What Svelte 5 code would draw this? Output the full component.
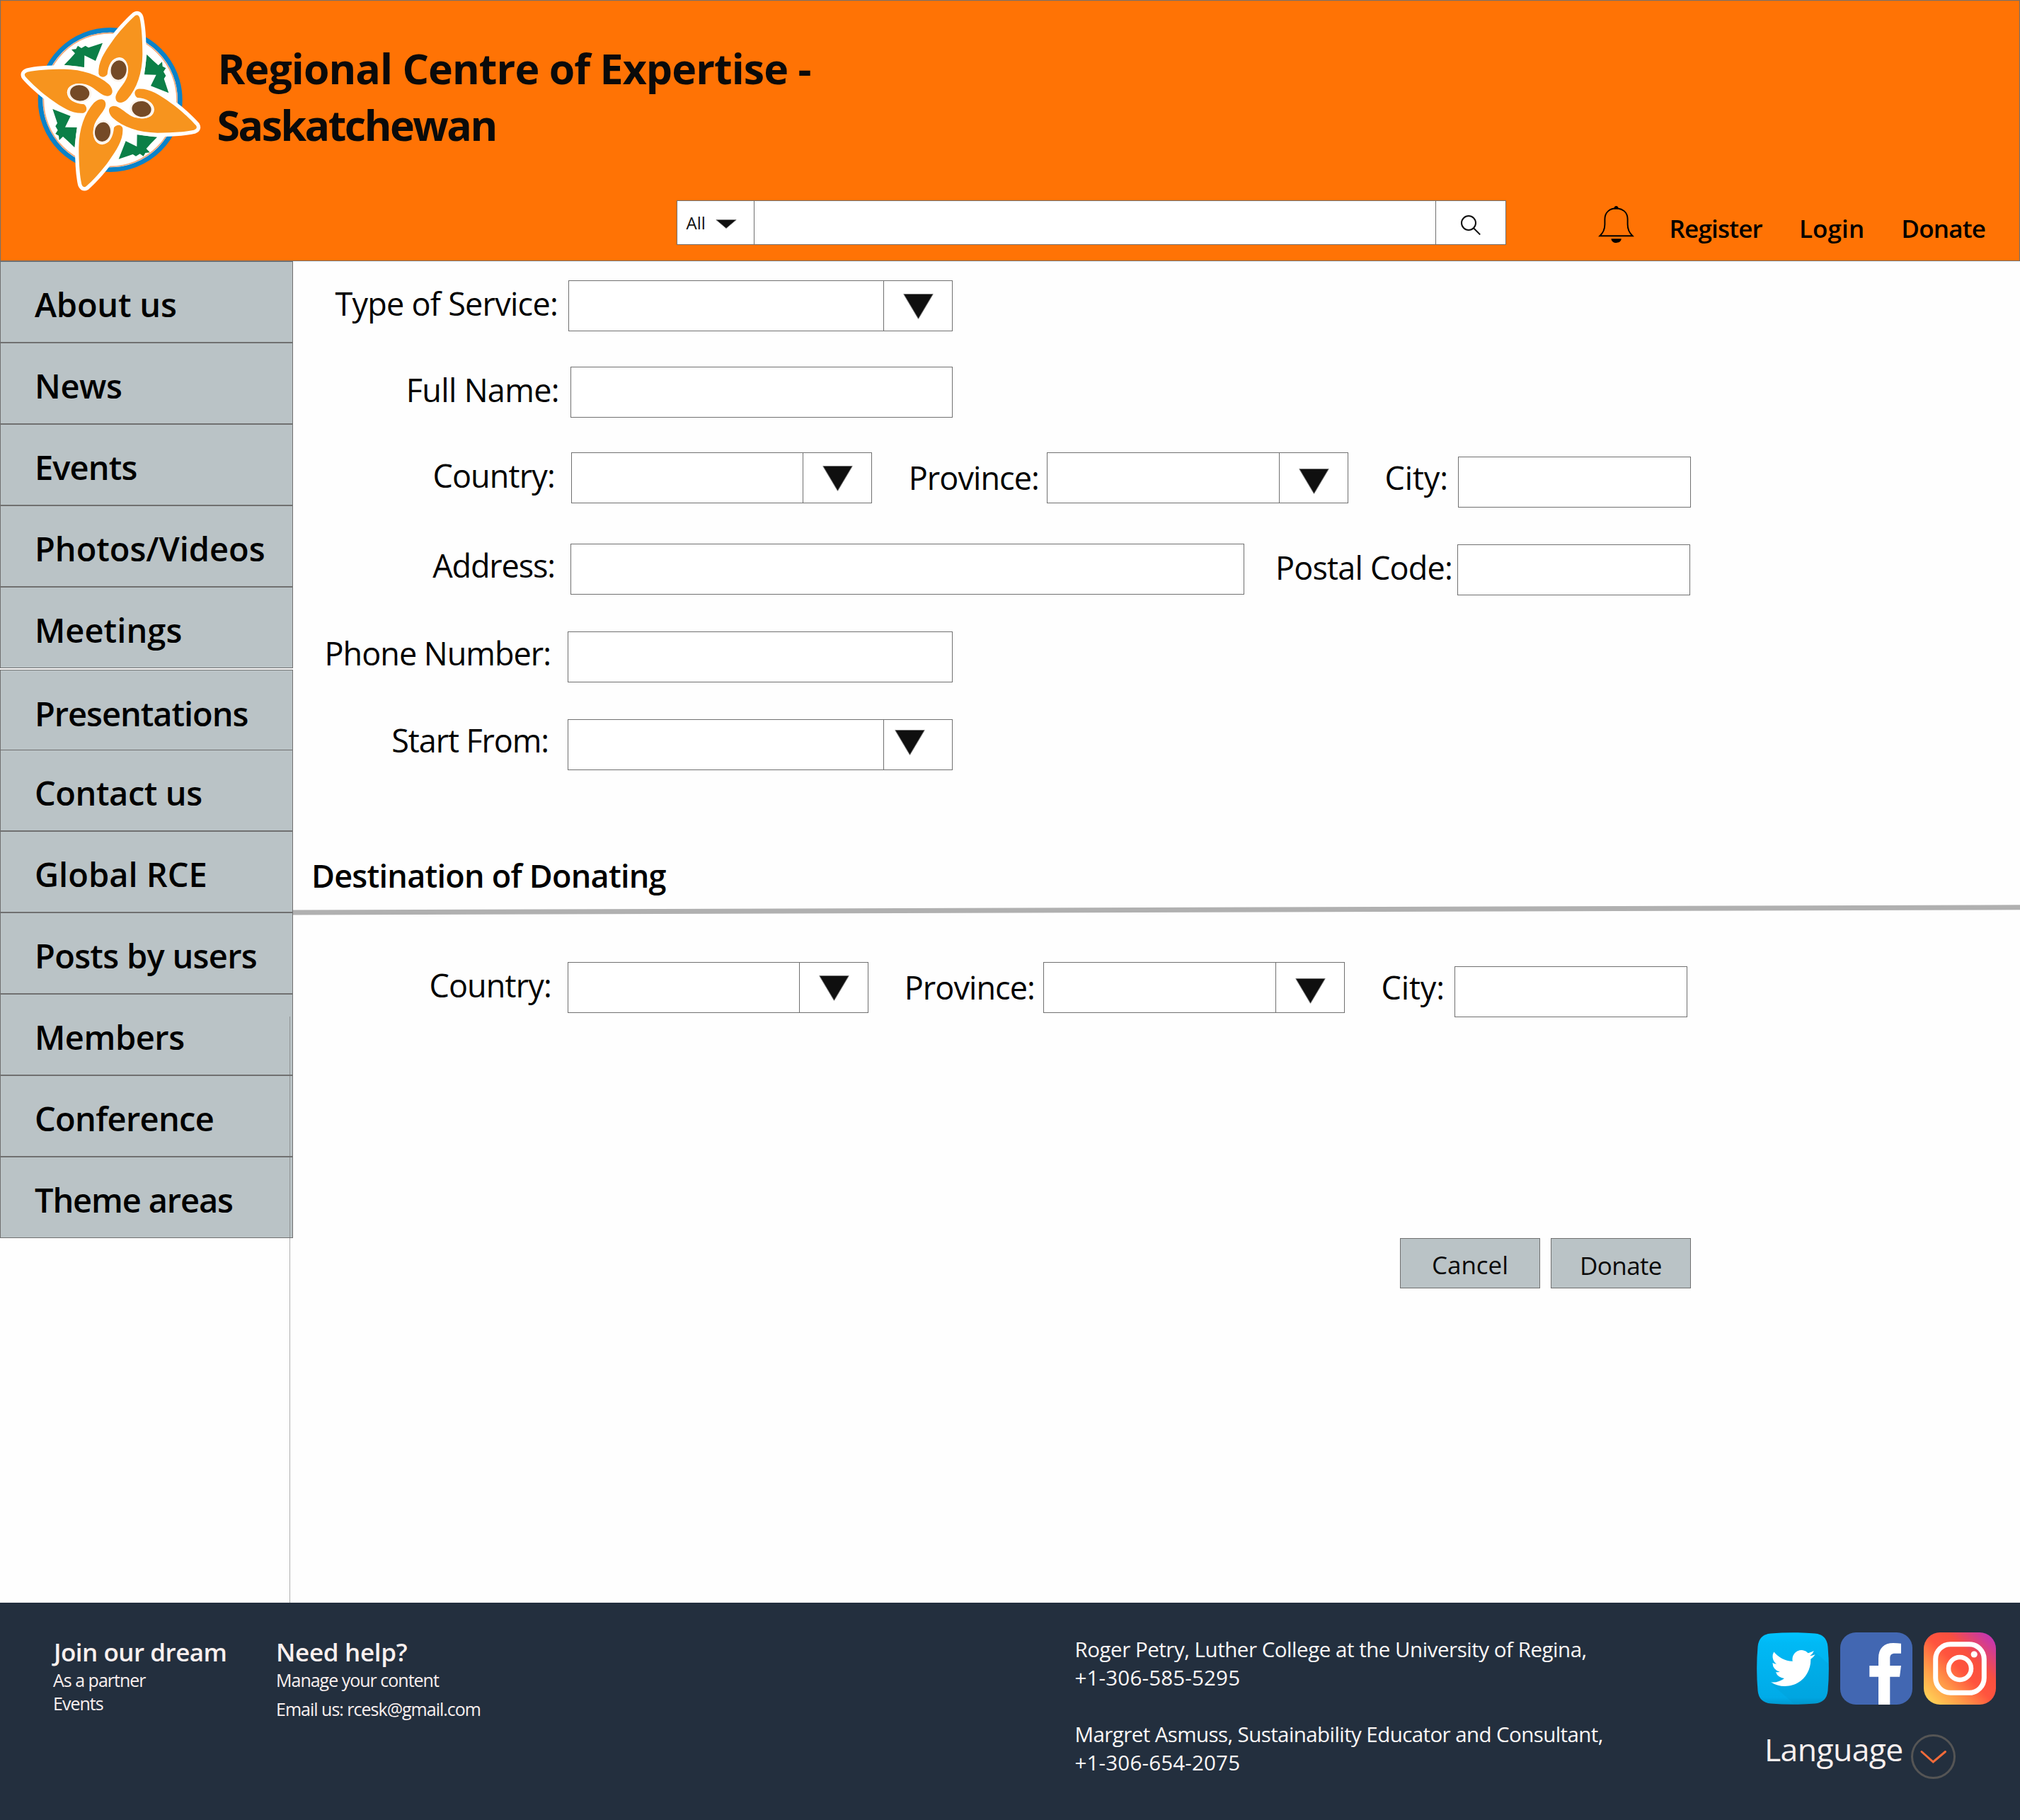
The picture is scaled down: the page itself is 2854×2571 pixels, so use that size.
<script>
  const navGroups = [
    [
      { label: 'About us', track: -0.22 },
      { label: 'News', track: -0.41 },
      { label: 'Events', track: -0.87 },
      { label: 'Photos/Videos', track: -0.05 },
      { label: 'Meetings', track: 0.05 }
    ],
    [{ label: 'Presentations', track: -1.05 }],
    [
      { label: 'Contact us', track: -0.45 },
      { label: 'Global RCE', track: 0.0 },
      { label: 'Posts by users', track: -0.7 },
      { label: 'Members', track: -0.45 },
      { label: 'Conference', track: -0.7 },
      { label: 'Theme areas', track: -1.15 }
    ]
  ];

  const account = [
    { label: 'Register', track: -0.8 },
    { label: 'Login', track: 0.12 },
    { label: 'Donate', track: -0.78 }
  ];

  const petals = [0, 90, 180, 270];
</script>

{#snippet field(name, label, isSelect = false)}
  <div class="field {name}">
    <span class="label">{label}</span>
    <div class="box">
      {#if isSelect}
        <div class="toggle">
          <svg class="caret" viewBox="0 0 43 36"><path d="M.8 .5H42.2L21.5 35.3Z" fill="#0f0f0f" stroke="#707070" stroke-width="1" /></svg>
        </div>
      {/if}
    </div>
  </div>
{/snippet}

<div class="page">
  <header>
    <div class="brand">
      <svg class="logo" viewBox="0 0 870 840">
        <circle cx="467" cy="423" r="296" fill="#fff" stroke="#0a82c8" stroke-width="20" />
        <circle cx="467" cy="423" r="283" fill="none" stroke="#f3a878" stroke-width="5" />
        {#each petals as angle}
          <g transform="rotate({angle} 469 428)">
            <path d="M272 275L300 246L318 226L303 210L322 208L330 194L345 204L362 194L375 202L435 182L405 258L358 235L357 285Z" fill="#0b7f47" />
          </g>
        {/each}
        {#each petals as angle}
          <g transform="rotate({angle} 469 428)">
            <path d="M573 66C545 90 500 140 478 172C440 225 415 265 418 312C422 330 445 330 455 315C458 275 475 245 505 243C540 245 548 285 540 320C530 360 490 385 490 415C492 442 520 440 540 420C580 375 603 310 604 230C604 170 600 110 592 75Q586 58 573 66Z" fill="#fff" stroke="#fff" stroke-width="32" stroke-linejoin="round" />
          </g>
        {/each}
        {#each petals as angle}
          <g transform="rotate({angle} 469 428)">
            <path d="M573 66C545 90 500 140 478 172C440 225 415 265 418 312C422 330 445 330 455 315C458 275 475 245 505 243C540 245 548 285 540 320C530 360 490 385 490 415C492 442 520 440 540 420C580 375 603 310 604 230C604 170 600 110 592 75Q586 58 573 66Z" fill="#f7941e" />
            <ellipse cx="503" cy="297" rx="40" ry="50" fill="#fdf3ea" transform="rotate(8 503 297)" />
            <ellipse cx="503" cy="297" rx="33" ry="41" fill="#754a26" transform="rotate(8 503 297)" />
          </g>
        {/each}
      </svg>
      <h1>Regional Centre of Expertise -<br /><span>Saskatchewan</span></h1>
    </div>
    <div class="utility">
      <div class="search">
        <div class="scope">
          <span>All</span>
          <svg class="scope-caret" viewBox="0 0 30 13"><path d="M.8 .5H29.2L15 12.5Z" fill="#0f0f0f" stroke="#707070" stroke-width=".8" /></svg>
        </div>
        <div class="query"></div>
        <div class="go">
          <svg viewBox="0 0 28 28" fill="none" stroke="#0f0f0f" stroke-width="2"><circle cx="11" cy="11" r="10" /><path d="M18 18.2L27.2 27.4" /></svg>
        </div>
      </div>
      <svg class="bell" viewBox="0 0 51 52">
        <path d="M2.4 42.3C7.5 37.5 9.4 33 9.4 26V18.500C9.400 8.500 17 3.300 25.500 3.300S41.600 8.500 41.600 18.500V26C41.600 33 43.500 37.500 48.600 42.300Z" fill="none" stroke="#000" stroke-width="1.9" />
        <path d="M22.200 4.400C22.200-1.400 28.800-1.400 28.800 4.400ZM18.400 46.200H32.800C32.500 49.800 29.500 52 25.600 52S18.700 49.800 18.400 46.200Z" />
      </svg>
      <nav class="account">
        {#each account as link}
          <span style:letter-spacing="{link.track}px">{link.label}</span>
        {/each}
      </nav>
    </div>
  </header>

  <div class="body">
    <aside>
      {#each navGroups as group}
        <ul>
          {#each group as item}
            <li style:letter-spacing="{item.track}px">{item.label}</li>
          {/each}
        </ul>
      {/each}
      <div class="guide"></div>
    </aside>

    <main>
      <div class="row r-service">{@render field('service', 'Type of Service:', true)}</div>
      <div class="row r-name">{@render field('full-name', 'Full Name:')}</div>
      <div class="row r-place">
        {@render field('country', 'Country:', true)}
        {@render field('province', 'Province:', true)}
        {@render field('city', 'City:')}
      </div>
      <div class="row r-address">
        {@render field('address', 'Address:')}
        {@render field('postal', 'Postal Code:')}
      </div>
      <div class="row r-phone">{@render field('phone', 'Phone Number:')}</div>
      <div class="row r-start">{@render field('start', 'Start From:', true)}</div>

      <h2>Destination of Donating</h2>
      <svg class="rule" viewBox="0 0 2440 18"><path d="M0 11L2440 3.800" stroke="#b0b0b0" stroke-width="7" /></svg>

      <div class="row r-destination">
        {@render field('country dest', 'Country:', true)}
        {@render field('province dest', 'Province:', true)}
        {@render field('city dest', 'City:')}
      </div>

      <div class="actions">
        <button class="cancel">Cancel</button>
        <button class="donate">Donate</button>
      </div>
    </main>
  </div>

  <footer>
    <section class="join">
      <h3>Join our dream</h3>
      <p>As a partner</p>
      <p>Events</p>
    </section>
    <section class="help">
      <h3>Need help?</h3>
      <p>Manage your content</p>
      <p>Email us: rcesk@gmail.com</p>
    </section>
    <section class="contacts">
      <p class="who">Roger Petry, Luther College at the University of Regina,</p>
      <p class="tel">+1-306-585-5295</p>
      <p class="who second">Margret Asmuss, Sustainability Educator and Consultant,</p>
      <p class="tel">+1-306-654-2075</p>
    </section>
    <section class="connect">
      <div class="social">
        <svg viewBox="0 0 102 102">
          <defs>
            <linearGradient id="tw" x1="0" y1="0" x2="0" y2="1"><stop offset="0" stop-color="#00c3ff" /><stop offset=".15" stop-color="#00b9f5" /><stop offset=".9" stop-color="#00abe8" /><stop offset="1" stop-color="#0098cf" /></linearGradient>
            <clipPath id="twc"><path d="M20 1.500Q51-1.200 82 1.500Q99 3 100.500 20Q103.200 51 100.500 82Q99 99 82 100.500Q51 103.200 20 100.500Q3 99 1.500 82Q-1.200 51 1.500 20Q3 3 20 1.500Z" /></clipPath>
          </defs>
          <g clip-path="url(#twc)">
            <rect width="102" height="102" fill="url(#tw)" />
            <path d="M81.500 27L102 45V102H54L21 73Z" fill="#0080b0" opacity=".13" />
            <path transform="translate(20 19.200) scale(2.610)" fill="#fff" d="M23.953 4.570a10 10 0 01-2.825.775 4.958 4.958 0 002.163-2.723c-.951.555-2.005.959-3.127 1.184a4.920 4.920 0 00-8.384 4.482C7.690 8.095 4.067 6.130 1.640 3.162a4.822 4.822 0 00-.666 2.475c0 1.710.870 3.213 2.188 4.096a4.904 4.904 0 01-2.228-.616v.060a4.923 4.923 0 003.946 4.827 4.996 4.996 0 01-2.212.085 4.936 4.936 0 004.604 3.417 9.867 9.867 0 01-6.102 2.105c-.390 0-.779-.023-1.170-.067a13.995 13.995 0 007.557 2.209c9.053 0 13.998-7.496 13.998-13.985 0-.210 0-.420-.015-.630A9.935 9.935 0 0024 4.590z" />
          </g>
        </svg>
        <svg viewBox="0 0 102 102">
          <rect width="102" height="102" rx="22" fill="#4267b2" />
          <path fill="#fff" d="M54 102V62.700H41.300V47H54V37C54 22 62 15 75 15Q81 15 86 15.800V29.700H77.500C72 29.700 70.300 32 70.300 37V47H86L84 62.700H70.300V102Z" />
        </svg>
        <svg viewBox="0 0 102 102">
          <defs><linearGradient id="ig" x1="0" y1="1" x2="1" y2="0"><stop offset="0" stop-color="#ffe15a" /><stop offset=".28" stop-color="#ff9a48" /><stop offset=".5" stop-color="#ff543e" /><stop offset=".66" stop-color="#f9503f" /><stop offset=".92" stop-color="#c837ab" /></linearGradient></defs>
          <rect width="102" height="102" rx="23" fill="url(#ig)" />
          <rect x="16.700" y="16.700" width="68.600" height="68.600" rx="21" fill="none" stroke="#fff" stroke-width="7" />
          <circle cx="51" cy="51" r="16" fill="none" stroke="#fff" stroke-width="6.500" />
          <circle cx="71.200" cy="31" r="4.600" fill="#fff" />
        </svg>
      </div>
      <div class="language">
        <span>Language</span>
        <svg viewBox="0 0 63 63" fill="none"><circle cx="31.500" cy="31.500" r="30" stroke="#555" stroke-width="3" /><path d="M15 24.500L31.300 39L48.500 24.500" stroke="#f26b3a" stroke-width="3" stroke-linecap="round" /></svg>
      </div>
    </section>
  </footer>
</div>

<style>
  .page {
    width: 2854px;
    height: 2571px;
    overflow: hidden;
    display: flex;
    flex-direction: column;
    background: #fefefe;
    color: #000;
    font-family: 'Open Sans', 'Noto Sans', sans-serif;
  }
  .page * { box-sizing: border-box; }
  h1, h2, h3, p, ul { margin: 0; padding: 0; }
  ul { list-style: none; }
  svg { display: block; flex: none; }
  span, li, p, h1, h2, h3 { white-space: nowrap; }

  header {
    height: 369px;
    flex: none;
    background: #ff7305;
    border: 1px solid #707070;
  }
  .brand { display: flex; height: 282px; }
  .logo { width: 290px; height: 280px; margin: -1px 0 0 -1px; }
  h1 {
    margin: 55px 0 0 17.5px;
    font-size: 59px;
    line-height: 80px;
    font-weight: 700;
    letter-spacing: -.94px;
    color: #0a0a0a;
  }
  h1 span { letter-spacing: -2.5px; margin-left: -1px; }
  .utility { display: flex; align-items: flex-start; }
  .search {
    display: flex;
    width: 1172px;
    height: 63px;
    margin-left: 955px;
    background: #fff;
    border: 1px solid #707070;
  }
  .scope {
    display: flex;
    align-items: center;
    gap: 14px;
    width: 109px;
    padding-left: 12.5px;
    border-right: 1px solid #707070;
    font-size: 24px;
    color: #0f0f0f;
  }
  .scope-caret { width: 30px; height: 13px; margin-top: 3px; }
  .query { flex: 1; }
  .go { width: 99px; padding: 20px 0 0 35px; border-left: 1px solid #707070; }
  .go svg { width: 28px; height: 28px; }
  .bell { width: 51px; height: 52px; margin: 8px 0 0 130px; }
  .account {
    display: flex;
    gap: 52px;
    margin: 9.5px 0 0 49.5px;
    font-size: 35px;
    line-height: 60px;
    font-weight: 600;
  }

  .body { display: flex; height: 1895px; }
  aside { position: relative; width: 414px; flex: none; }
  aside ul + ul { margin-top: 2px; }
  aside ul:nth-child(3) { position: relative; margin-top: -2px; }
  li {
    height: 115px;
    padding: 7px 0 0 48px;
    border: 1px solid #707070;
    background: #bac3c6;
    font-size: 47px;
    line-height: 107px;
    font-weight: 600;
  }
  aside ul:nth-child(2) li { padding-top: 8px; }
  .guide {
    position: absolute;
    left: 409px;
    top: 1067px;
    bottom: 0;
    width: 1px;
    background: rgba(112, 112, 112, .55);
  }

  main { flex: 1; display: flex; flex-direction: column; }
  .row { display: flex; height: 72px; flex: none; }
  .r-service { margin-top: 27px; }
  .r-name { margin-top: 50px; }
  .r-place { margin-top: 49px; }
  .r-address { margin-top: 57px; }
  .r-phone, .r-start { margin-top: 52px; }
  .r-destination { margin-top: 63px; }

  .field { display: flex; align-items: flex-start; --line: 66px; --caret-top: 18px; --drop: 0px; }
  .label {
    width: var(--label);
    flex: none;
    text-align: right;
    font-size: 45px;
    line-height: var(--line);
    letter-spacing: var(--track);
  }
  .box {
    display: flex;
    justify-content: flex-end;
    flex: none;
    width: var(--box);
    height: 72px;
    margin: var(--drop) 0 0 var(--gap);
    border: 1px solid #707070;
    background: #fff;
  }
  .toggle {
    display: flex;
    justify-content: center;
    width: 97px;
    padding-top: var(--caret-top);
    border-left: 1px solid #707070;
  }
  .caret { width: 43px; height: 36px; }

  .service { --label: 374px; --gap: 15px; --box: 543px; --track: -.75px; }
  .full-name { --label: 376px; --gap: 16px; --box: 540px; --track: -.66px; }
  .country { --label: 370px; --gap: 23px; --box: 425px; --track: -.85px; }
  .province { --label: 236px; --gap: 11px; --box: 426px; --track: -.92px; --line: 72px; --caret-top: 22px; }
  .city { --label: 141px; --gap: 14px; --box: 329px; --track: -.12px; --line: 72px; --drop: 6px; }
  .address { --label: 370px; --gap: 22px; --box: 952px; --track: -1.15px; --line: 62px; }
  .postal { --label: 294px; --gap: 7px; --box: 329px; --track: -.8px; --line: 68px; --drop: 1px; }
  .phone { --label: 364px; --gap: 24px; --box: 544px; --track: -1px; --line: 62px; }
  .start { --label: 361px; --gap: 27px; --box: 544px; --track: -1.12px; --line: 60px; --caret-top: 14px; }
  .start .toggle { padding-right: 23px; }
  .country.dest { --label: 365px; }
  .province.dest { --label: 235px; --gap: 12px; }

  h2 {
    margin: 119px 0 0 26px;
    font-size: 45px;
    line-height: 60px;
    font-weight: 600;
    letter-spacing: -.77px;
  }
  .rule { width: 2440px; height: 18px; margin-top: 11px; }

  .actions { display: flex; gap: 15px; margin: 318px 0 0 1564px; }
  button {
    width: 198px;
    height: 71px;
    padding: 0;
    border: 1px solid #707070;
    background: #bac3c6;
    color: #0a0a0a;
    font-family: inherit;
    font-size: 35px;
  }
  .cancel { padding-top: 3px; }
  .donate { padding-top: 6px; letter-spacing: -.61px; }

  footer {
    flex: 1;
    display: flex;
    align-items: flex-start;
    background: #232f3e;
    color: #f9f0ef;
  }
  .join { width: 315px; margin: 49px 0 0 75px; }
  .help { width: 1128.5px; margin-top: 49px; }
  h3 { font-size: 35px; line-height: 42px; font-weight: 600; margin-bottom: 2px; letter-spacing: -.31px; }
  .join h3 { padding-left: 1px; letter-spacing: -.5px; }
  .join p, .help p { font-size: 25px; line-height: 33px; letter-spacing: -1px; }
  .help p + p { margin-top: 8px; }
  .contacts { width: 963.5px; margin-top: 46px; font-size: 29.5px; line-height: 40px; color: #fbf7f6; }
  .who { letter-spacing: -.47px; }
  .second { margin-top: 40px; letter-spacing: -.58px; }
  .tel { letter-spacing: .19px; }
  .connect { margin-top: 42px; }
  .social { display: flex; gap: 16px; }
  .social svg { width: 102px; height: 102px; }
  .language { display: flex; gap: 12px; padding: 30px 0 0 11px; }
  .language span { width: 195px; font-size: 44.5px; line-height: 66px; letter-spacing: -.61px; }
  .language svg { width: 63px; height: 63px; margin-top: 12px; }
</style>
